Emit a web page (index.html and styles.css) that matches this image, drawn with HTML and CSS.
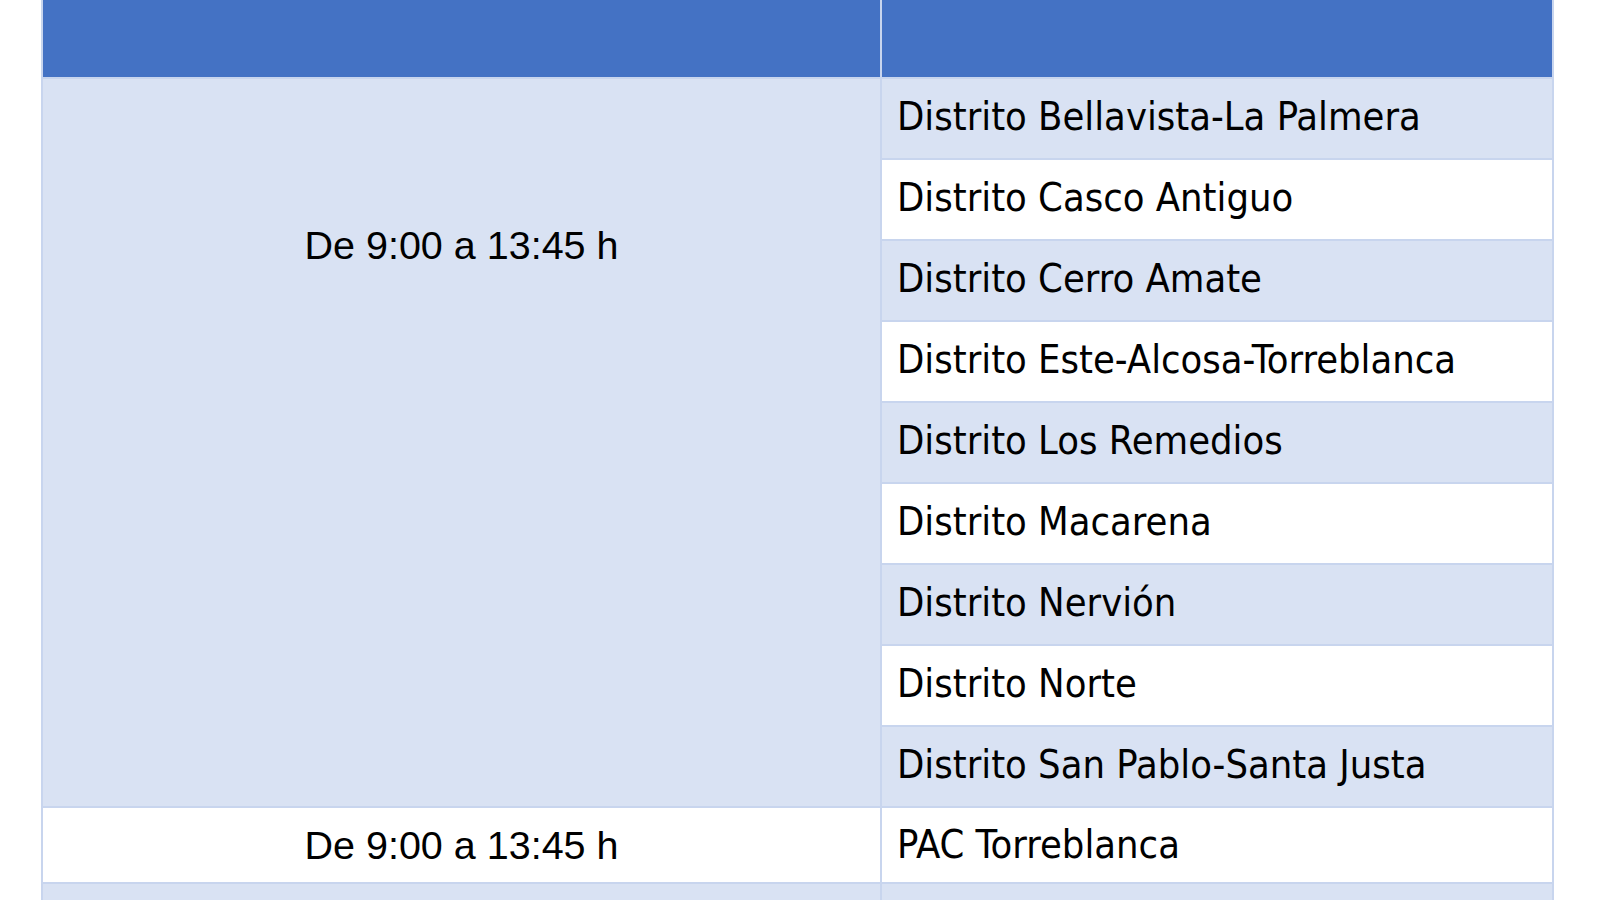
FILE: index.html
```html
<!DOCTYPE html>
<html lang="es">
<head>
<meta charset="utf-8">
<title>Horarios</title>
<link rel="stylesheet" href="styles.css">
</head>
<body>
<table class="sched">
  <thead>
    <tr class="head"><th class="c-time"></th><th class="c-place"></th></tr>
  </thead>
  <tbody>
    <tr class="r-alt"><td class="time merged" rowspan="9"><div class="time-inner">De 9:00 a 13:45 h</div></td><td class="place">Distrito Bellavista-La Palmera</td></tr>
    <tr class="r-white"><td class="place">Distrito Casco Antiguo</td></tr>
    <tr class="r-alt"><td class="place">Distrito Cerro Amate</td></tr>
    <tr class="r-white"><td class="place">Distrito Este-Alcosa-Torreblanca</td></tr>
    <tr class="r-alt"><td class="place">Distrito Los Remedios</td></tr>
    <tr class="r-white"><td class="place">Distrito Macarena</td></tr>
    <tr class="r-alt"><td class="place">Distrito Nervión</td></tr>
    <tr class="r-white"><td class="place">Distrito Norte</td></tr>
    <tr class="r-alt"><td class="place">Distrito San Pablo-Santa Justa</td></tr>
    <tr class="r-white short"><td class="time">De 9:00 a 13:45 h</td><td class="place">PAC Torreblanca</td></tr>
    <tr class="r-alt"><td class="time"></td><td class="place"></td></tr>
  </tbody>
</table>
</body>
</html>
```
FILE: styles.css
```css
html, body {
  margin: 0;
  padding: 0;
  background: #ffffff;
  overflow: hidden;
}

.sched {
  margin-left: 41px;
  border-collapse: collapse;
  table-layout: fixed;
  width: 1507px;
}

.c-time { width: 837px; }
.c-place { width: 670px; }

.head th {
  height: 77px;
  padding: 0;
  background: #4472c4;
  border-left: 2px solid #c8d5ee;
  border-right: 2px solid #c8d5ee;
  border-bottom: 2px solid #c8d5ee;
}
.head th + th {
  border-left: 2px solid #a9bde6;
}

td {
  padding: 0;
  border: 2px solid #c8d5ee;
  color: #000;
}

tbody tr { height: 81px; }
tbody tr.short { height: 76px; }

.r-alt td { background: #d9e2f3; }
.r-white td.place { background: #ffffff; }
.r-white.short td { background: #ffffff; }
td.merged { background: #d9e2f3; vertical-align: top; }

.time {
  font-family: "Liberation Sans", Arial, sans-serif;
  font-size: 39.5px;
  text-align: center;
}

.time-inner {
  padding-top: 143px;
  line-height: 46px;
}

.place {
  font-family: "DejaVu Sans Condensed", "DejaVu Sans", sans-serif;
  font-size: 39.5px;
  padding: 0 0 5px 15px;
  white-space: nowrap;
}

.short .place { padding-bottom: 2px; }
```
